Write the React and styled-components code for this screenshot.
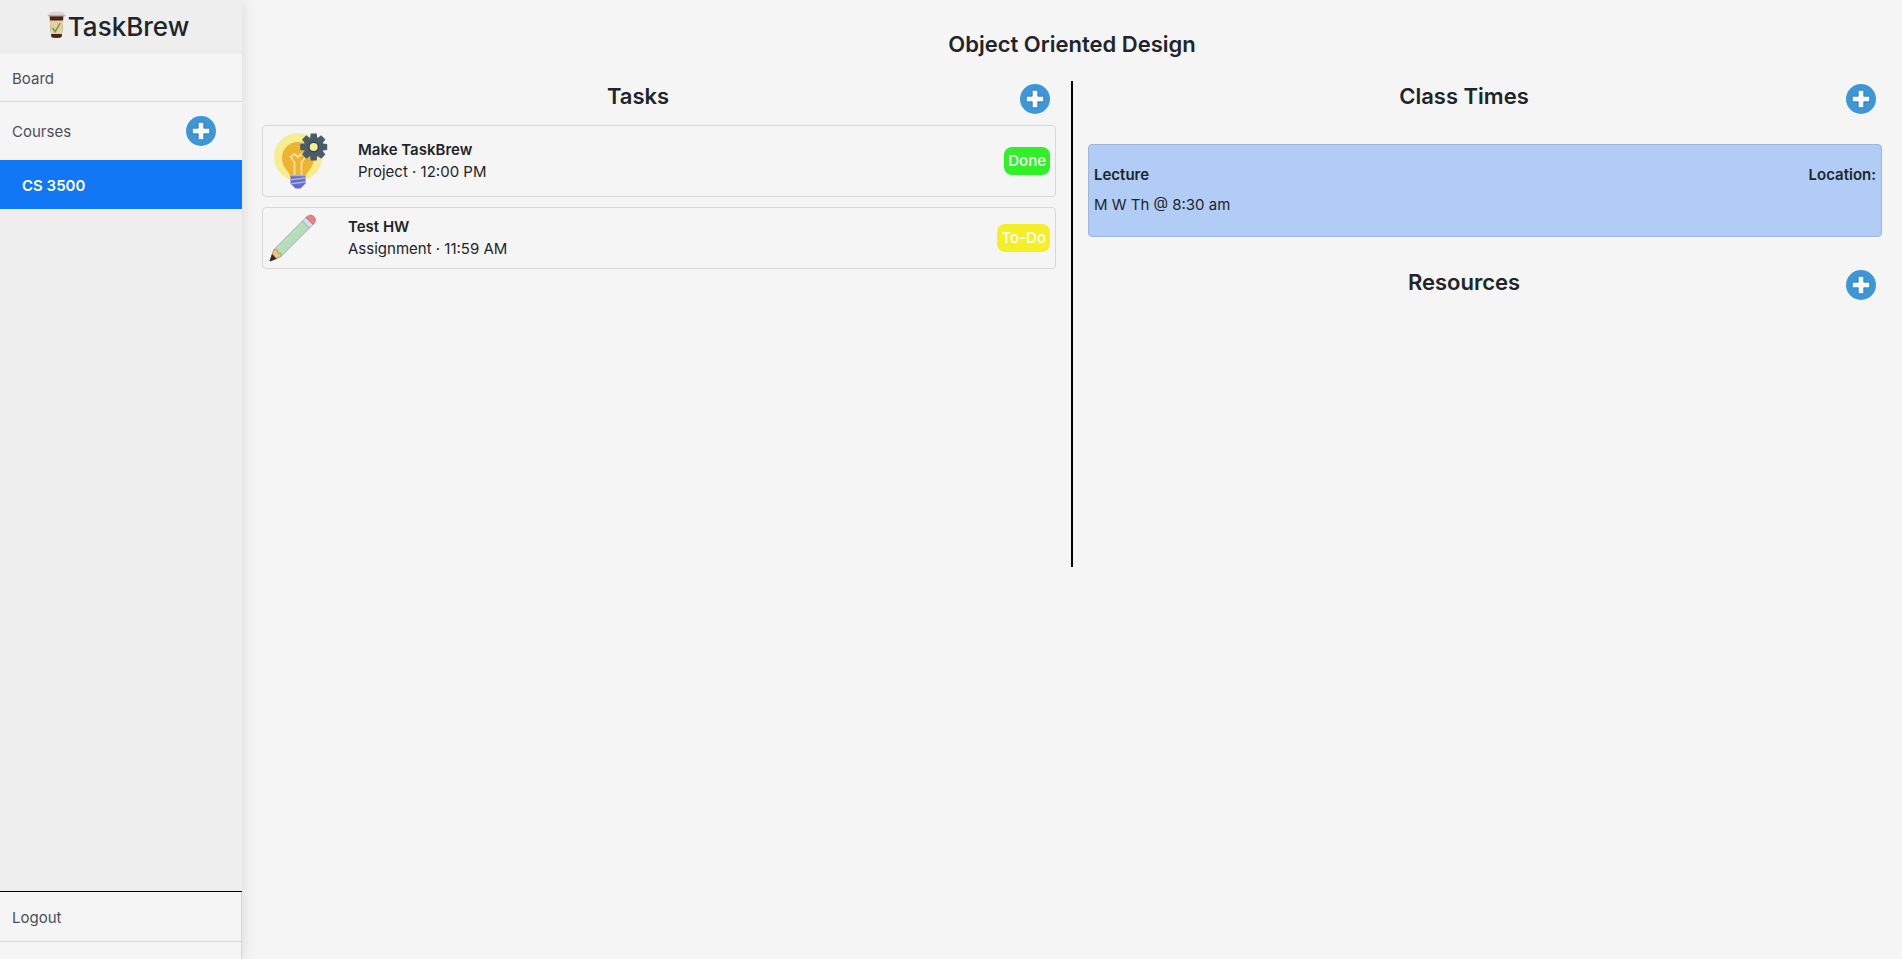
import styled, { createGlobalStyle } from "styled-components";

const GlobalStyle = createGlobalStyle`
    * {
        box-sizing: border-box;
    }

    body {
        margin: 0;
        background-color: #f5f5f5;
        color: #212529;
        font-family: Inter, "Liberation Sans", sans-serif;
        font-size: 15px;
        line-height: 22px;
    }
`

const Page = styled.div`
    display: flex;
    min-height: 100vh;
`

const Sidebar = styled.aside`
    width: 242px;
    flex-shrink: 0;
    display: flex;
    flex-direction: column;
    background-color: #eeeeee;
    box-shadow: 0 0 16px rgba(0, 0, 0, 0.12);
`

const Brand = styled.div`
    height: 54px;
    padding: 11px 6px 0 0;
    display: flex;
    align-items: flex-start;
    justify-content: center;
    gap: 2px;
`

const BrandName = styled.h1`
    margin: 0;
    font-size: 26px;
    line-height: 32px;
    font-weight: 500;
`

const SideItem = styled.div`
    height: ${(props) => props.$height}px;
    padding: 0 26px 0 12px;
    display: flex;
    align-items: center;
    justify-content: space-between;
    background-color: #f5f5f5;
    border-bottom: ${(props) => (props.$line ? "1px solid #d8d8d8" : "none")};
`

const SideLink = styled.a`
    padding-top: 2px;
    color: #495057;
    text-decoration: none;
`

const CourseLink = styled.a`
    height: 49px;
    padding: 2px 22px 0;
    display: flex;
    align-items: center;
    background-color: #1277f4;
    color: #ffffff;
    font-weight: 600;
    text-decoration: none;
`

const SideFooter = styled.div`
    margin-top: auto;
    height: 68px;
    padding-right: 1px;
    border-top: 1px solid #000000;
    background: linear-gradient(to left, #d8d8d8 1px, #f5f5f5 1px);
`

const Main = styled.main`
    flex: 1;
    padding: 30px 20px;
`

const CourseTitle = styled.h2`
    margin: 0 0 23px;
    font-size: 22px;
    line-height: 28px;
    font-weight: 600;
    text-align: center;
`

const Columns = styled.div`
    display: grid;
    grid-template-columns: 1fr 2px 1fr;
    column-gap: 15px;
    min-height: calc(50vh + 6px);
`

const Divider = styled.div`
    background-color: #000000;
`

const SectionHeader = styled.div`
    display: flex;
    align-items: flex-start;
    margin-bottom: ${(props) => props.$space}px;
`

const SectionTitle = styled.h3`
    flex: 1;
    margin: 0;
    font-size: 22px;
    line-height: 30px;
    font-weight: 600;
    text-align: center;
`

const IconButton = styled.button`
    display: flex;
    padding: ${(props) => (props.$flush ? "0" : "3px 6px")};
    border: none;
    background: none;
    cursor: pointer;
`

const TaskList = styled.div`
    display: flex;
    flex-direction: column;
    gap: 10px;
`

const TaskCard = styled.article`
    display: flex;
    align-items: center;
    gap: 30px;
    padding: 5px;
    border: 1px solid #d8d8d8;
    border-radius: 4px;
`

const TaskText = styled.div`
    flex: 1;
`

const Name = styled.div`
    font-weight: 600;
`

const Badge = styled.span`
    padding: 3px 4px;
    border-radius: 8px;
    background-color: ${(props) => props.$color};
    color: #ffffff;
    font-weight: 500;
`

const ClassCard = styled.article`
    display: flex;
    justify-content: space-between;
    margin-bottom: 30px;
    padding: 19px 5px 20px;
    border: 1px solid #9eb5dc;
    border-radius: 4px;
    background-color: #b1ccf5;
`

const ClassInfo = styled.div`
    display: flex;
    flex-direction: column;
    gap: 8px;
`

function CupIcon() {
    return (
        <svg width="19" height="28" viewBox="0 0 19 28" aria-hidden="true">
            <path d="M2.500 4h14l-1.800 22q-1 1-5.200 1T4.300 26z" fill="#4a2418" />
            <path d="M2.700 9.500h13.600l-1.200 13.500H3.900z" fill="#e6cfa4" />
            <path d="M2.500 1.500Q3 .700 9.500 .700t7 .800l.700 1.700 1.300 .800v1.300H.500V4l1.300-.800z" fill="#d9d6d5" />
            <path d="M1 4.700h17" stroke="#aaa5a3" strokeWidth="1" />
            <path d="M5.500 17l2.700 3.700 5-8.700" fill="none" stroke="#5da33a" strokeWidth="1.500" />
        </svg>
    )
}

function PlusIcon() {
    return (
        <svg width="30" height="30" viewBox="0 0 30 30" aria-hidden="true">
            <circle cx="15" cy="15" r="15" fill="#3d97d6" />
            <path d="M12.200 6.300h5.600v5.900h5.900v5.600h-5.900v5.900h-5.600v-5.900H6.300v-5.600h5.900z" fill="#f8f8f8" stroke="#2b78b4" strokeWidth=".8" />
        </svg>
    )
}

function BulbIcon() {
    return (
        <svg width="60" height="60" viewBox="0 0 60 60" aria-hidden="true">
            <circle cx="30" cy="26" r="24" fill="#f5ed91" />
            <path d="M30 11C20.500 11 14 18 14 27c0 6 3 10 6 14 2 3 2.500 3.500 2.500 5h15c0-1.500 .500-2 2.500-5 3-4 6-8 6-14 0-9-6.500-16-16-16z" fill="#edb52f" />
            <path d="M26.500 45V31.500L22.500 26l4-3 3.500 3 3.500-3 4 3-4 5.500V45" fill="none" stroke="#f7dda0" strokeWidth="1.800" />
            <path d="M22.500 44.500H37.500v8L32.500 57.500h-5L22.500 52.500z" fill="#646bc8" />
            <path d="M22.500 44.500h15M22.500 48.800l15-1.800M22.500 52.800l15-1.800" stroke="#a4b2f0" strokeWidth="1.500" />
            <g transform="translate(45.700 16)">
                <g fill="#475d69">
                    <circle r="10" />
                    {[0, 45, 90, 135, 180, 225, 270, 315].map((angle) => (
                        <path key={angle} d="M-3.600-9l.600-4.500h6L3.600-9z" transform={`rotate(${angle})`} />
                    ))}
                </g>
                <circle r="5.400" fill="#35454f" />
                <circle r="4" fill="#f5ed91" />
            </g>
        </svg>
    )
}

function PencilIcon() {
    return (
        <svg width="50" height="50" viewBox="0 0 50 50" aria-hidden="true">
            <path d="M2 48l4-11.500L34.500 8l7 7L13 43.500z" fill="#b4dfb8" stroke="#8d9c93" strokeWidth=".7" />
            <path d="M2 48l4-11.500 3.500 .500 .500 3 3 .500v3z" fill="#efc478" stroke="#8c7551" strokeWidth=".5" />
            <path d="M2 48l2.200-6.500 4 4.200z" fill="#292e33" stroke="#292e33" strokeWidth=".7" />
            <path d="M34.500 8l3.500-3.500 7 7-3.500 3.500z" fill="#d5dfee" stroke="#8999b0" strokeWidth=".7" />
            <path d="M38 4.500C41 1.500 44 1.700 46 3.700s2 4.800-1 7.800z" fill="#ed7e83" stroke="#b8585e" strokeWidth=".7" />
        </svg>
    )
}

const tasks = [
    { name: "Make TaskBrew", kind: "Project", time: "12:00 PM", status: "Done", color: "#30f127", Icon: BulbIcon },
    { name: "Test HW", kind: "Assignment", time: "11:59 AM", status: "To-Do", color: "#f5ef28", Icon: PencilIcon },
]

function Section({ title, label, space }) {
    return (
        <SectionHeader $space={space}>
            <SectionTitle>{title}</SectionTitle>
            <IconButton type="button" aria-label={label}><PlusIcon /></IconButton>
        </SectionHeader>
    )
}

export default function App() {
    return (
        <Page>
            <GlobalStyle />
            <Sidebar>
                <Brand>
                    <CupIcon />
                    <BrandName>TaskBrew</BrandName>
                </Brand>
                <nav>
                    <SideItem $height={48} $line>
                        <SideLink href="#board">Board</SideLink>
                    </SideItem>
                    <SideItem $height={58}>
                        <SideLink href="#courses">Courses</SideLink>
                        <IconButton type="button" $flush aria-label="Add course"><PlusIcon /></IconButton>
                    </SideItem>
                    <CourseLink href="#cs3500">CS 3500</CourseLink>
                </nav>
                <SideFooter>
                    <SideItem $height={50} $line>
                        <SideLink href="#logout">Logout</SideLink>
                    </SideItem>
                </SideFooter>
            </Sidebar>
            <Main>
                <CourseTitle>Object Oriented Design</CourseTitle>
                <Columns>
                    <section>
                        <Section title="Tasks" label="Add task" space={8} />
                        <TaskList>
                            {tasks.map(({ name, kind, time, status, color, Icon }) => (
                                <TaskCard key={name}>
                                    <Icon />
                                    <TaskText>
                                        <Name>{name}</Name>
                                        <div>{kind} · {time}</div>
                                    </TaskText>
                                    <Badge $color={color}>{status}</Badge>
                                </TaskCard>
                            ))}
                        </TaskList>
                    </section>
                    <Divider />
                    <section>
                        <Section title="Class Times" label="Add class time" space={27} />
                        <ClassCard>
                            <ClassInfo>
                                <Name>Lecture</Name>
                                <div>M W Th @ 8:30 am</div>
                            </ClassInfo>
                            <Name>Location:</Name>
                        </ClassCard>
                        <Section title="Resources" label="Add resource" space={8} />
                    </section>
                </Columns>
            </Main>
        </Page>
    )
}
